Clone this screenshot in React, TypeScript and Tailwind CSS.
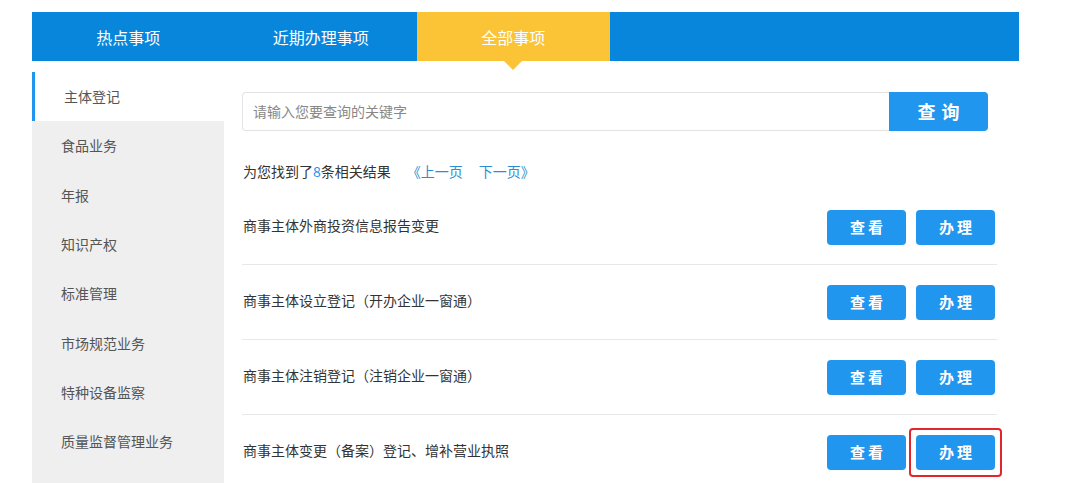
import React from "react";

const font = { fontFamily: '"Noto Sans CJK SC", "Microsoft YaHei", sans-serif' };

const tabs = ["热点事项", "近期办理事项", "全部事项"];
const side = ["主体登记", "食品业务", "年报", "知识产权", "标准管理", "市场规范业务", "特种设备监察", "质量监督管理业务"];
const rows = [
  "商事主体外商投资信息报告变更",
  "商事主体设立登记（开办企业一窗通）",
  "商事主体注销登记（注销企业一窗通）",
  "商事主体变更（备案）登记、增补营业执照",
];

function Btn({ label }: { label: string }) {
  return (
    <button className="w-[79px] h-[35px] rounded-[4px] bg-[#2196ee] text-white text-[15px] font-semibold tracking-[3px] flex items-center justify-center pl-[3px]">
      {label}
    </button>
  );
}

export default function App() {
  return (
    <div className="w-[1080px] h-[483px] bg-white overflow-hidden pt-[12px] pl-[32px]" style={font}>
      <div className="w-[987px]">
        <div className="relative h-[49px] bg-[#0786dc] flex">
          {tabs.map((t, i) => (
            <div
              key={t}
              className={
                "relative w-[192.5px] h-full flex items-center justify-center text-white text-[16px] " +
                (i === 2 ? "bg-[#fbc436]" : "")
              }
            >
              {t}
              {i === 2 && (
                <div className="absolute left-1/2 -translate-x-1/2 top-full w-0 h-0 border-l-[9px] border-r-[9px] border-t-[9px] border-l-transparent border-r-transparent border-t-[#fbc436]" />
              )}
            </div>
          ))}
        </div>
        <div className="flex mt-[11px]">
          <div className="w-[192px] h-[420px] bg-[#efeff0] flex flex-col">
            {side.map((s, i) => (
              <div
                key={s}
                className={
                  "h-[49.3px] flex items-center pl-[29px] text-[14px] text-[#555] " +
                  (i === 0 ? "bg-white border-l-[3px] border-[#2196ee] pl-[26px]" : "")
                }
              >
                {s}
              </div>
            ))}
          </div>
          <div className="flex-1 pl-[18px] pr-[22px] pt-[20px]">
            <div className="flex h-[39px] mr-[9px]">
              <div className="flex-1 border border-[#e3e3e3] border-r-0 rounded-l-[4px] flex items-center pl-[10px] text-[14px] text-[#888]">
                请输入您要查询的关键字
              </div>
              <button className="w-[99px] h-full bg-[#2196ee] rounded-r-[4px] text-white text-[18px] font-bold tracking-[6px] pl-[6px]">
                查询
              </button>
            </div>
            <div className="mt-[29px] h-[22px] flex items-center text-[14px] text-[#333] pl-[1px]">
              <span>为您找到了</span>
              <span className="text-[#2196ee]">8</span>
              <span>条相关结果</span>
              <span className="ml-[16px] text-[#2a8fd0]">《上一页</span>
              <span className="ml-[16px] text-[#2a8fd0]">下一页》</span>
            </div>
            <div className="mt-[8px]">
              {rows.map((r, i) => (
                <div
                  key={r}
                  className={
                    "h-[75px] flex items-center justify-between box-border " +
                    (i < rows.length - 1 ? "border-b border-[#e8e8e8]" : "")
                  }
                >
                  <span className="text-[14px] text-[#333] pl-[1px] -mt-[4px]">{r}</span>
                  <div className="flex gap-[10px] mr-[2px]">
                    <Btn label="查看" />
                    <div className="relative">
                      <Btn label="办理" />
                      {i === 3 && (
                        <div className="absolute -inset-[7px] border-[2.5px] border-[#e3262b] rounded-[4px]" />
                      )}
                    </div>
                  </div>
                </div>
              ))}
            </div>
          </div>
        </div>
      </div>
    </div>
  );
}
